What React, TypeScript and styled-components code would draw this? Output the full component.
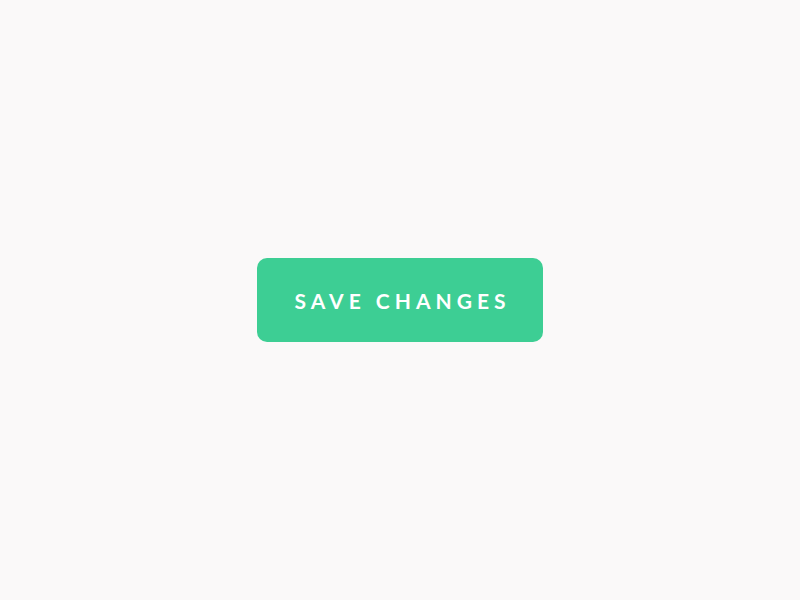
import React from "react";
import styled, { createGlobalStyle } from "styled-components";

const Global = createGlobalStyle`
  html, body { margin: 0; padding: 0; background: #faf9f9; }
`;

const Page = styled.div`
  width: 800px;
  height: 600px;
  display: flex;
  align-items: center;
  justify-content: center;
  background: #faf9f9;
`;

const Button = styled.button`
  width: 286px;
  height: 84px;
  border: none;
  border-radius: 10px;
  background: #3dce94;
  color: #ffffff;
  font-family: "Lato", "Noto Sans", sans-serif;
  font-weight: 700;
  font-size: 21px;
  letter-spacing: 5px;
  text-transform: uppercase;
  display: flex;
  align-items: center;
  justify-content: center;
  padding: 0 0 0 5px;
  cursor: pointer;
`;

export default function App() {
  return (
    <>
      <Global />
      <Page>
        <Button>Save Changes</Button>
      </Page>
    </>
  );
}
